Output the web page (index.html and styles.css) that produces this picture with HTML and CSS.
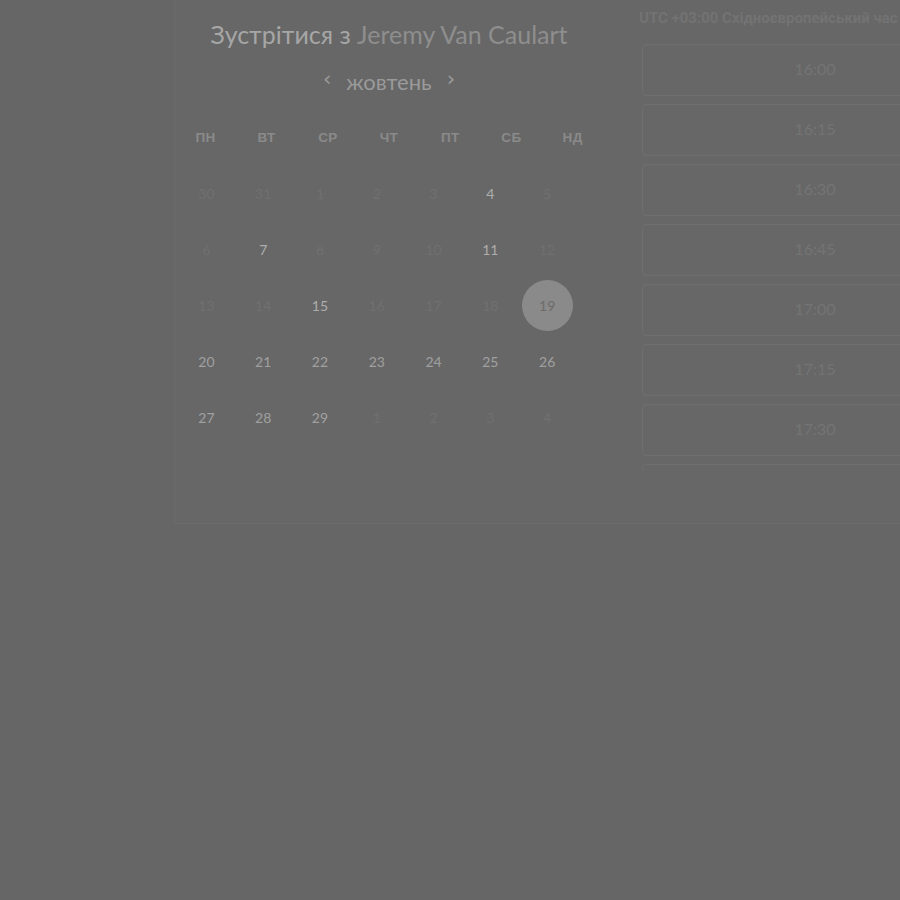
FILE: index.html
```html
<!DOCTYPE html>
<html lang="uk">
<head>
<meta charset="utf-8">
<link rel="stylesheet" href="styles.css">
</head>
<body>
<div class="panel">
  <section class="cal">
    <h1 class="title"><span class="lead">Зустрітися з</span> <span class="name">Jeremy Van Caulart</span></h1>
    <div class="month">
      <span class="chev">‹</span>
      <span class="mname">жовтень</span>
      <span class="chev">›</span>
    </div>
    <div class="weekdays">
      <span>ПН</span><span>ВТ</span><span>СР</span><span>ЧТ</span><span>ПТ</span><span>СБ</span><span>НД</span>
    </div>
    <div class="days">
      <span class="d off">30</span><span class="d off">31</span><span class="d off">1</span><span class="d off">2</span><span class="d off">3</span><span class="d on">4</span><span class="d off">5</span>
      <span class="d off">6</span><span class="d on">7</span><span class="d off">8</span><span class="d off">9</span><span class="d off">10</span><span class="d on">11</span><span class="d off">12</span>
      <span class="d off">13</span><span class="d off">14</span><span class="d on">15</span><span class="d off">16</span><span class="d off">17</span><span class="d off">18</span><span class="d sel">19</span>
      <span class="d mid">20</span><span class="d mid">21</span><span class="d mid">22</span><span class="d mid">23</span><span class="d mid">24</span><span class="d mid">25</span><span class="d mid">26</span>
      <span class="d mid">27</span><span class="d mid">28</span><span class="d mid">29</span><span class="d off">1</span><span class="d off">2</span><span class="d off">3</span><span class="d off">4</span>
    </div>
  </section>
  <section class="times">
    <div class="tz">UTC +03:00 Східноєвропейський час</div>
    <div class="slots">
      <div class="slot">16:00</div>
      <div class="slot">16:15</div>
      <div class="slot">16:30</div>
      <div class="slot">16:45</div>
      <div class="slot">17:00</div>
      <div class="slot">17:15</div>
      <div class="slot">17:30</div>
      <div class="slot"></div>
    </div>
  </section>
</div>
</body>
</html>
```
FILE: styles.css
```css
html, body {
  margin: 0;
  padding: 0;
  background: #666666;
  width: 900px;
  height: 900px;
  overflow: hidden;
}

.panel {
  display: flex;
  margin-left: 174px;
  width: 900px;
  height: 523px;
  border-left: 1px solid #6b6b6b;
  border-bottom: 1px solid #6b6b6b;
  background: #676767;
}

.cal {
  flex: none;
  width: 428px;
  display: flex;
  flex-direction: column;
  align-items: center;
}

.title {
  margin: 18px 0 0;
  font-family: "Lato", "Open Sans", sans-serif;
  font-weight: 400;
  font-size: 25px;
  line-height: 32px;
  white-space: nowrap;
}
.title .lead { color: #a6a6a6; }
.title .name { color: #8e8e8e; }

.month {
  margin-top: 18px;
  display: flex;
  align-items: center;
  gap: 15px;
  height: 28px;
}
.mname {
  font-family: "Lato", "Open Sans", sans-serif;
  font-size: 22px;
  color: #9a9a9a;
  line-height: 28px;
}
.chev {
  font-family: "DejaVu Sans", sans-serif;
  font-size: 21px;
  color: #9a9a9a;
  line-height: 28px;
  margin-top: -6px;
}

.weekdays {
  margin-top: 34px;
  display: grid;
  grid-template-columns: repeat(7, 61.2px);
  font-family: "Liberation Sans", Arial, sans-serif;
  font-weight: 700;
  font-size: 13.5px;
  line-height: 16px;
  color: #8a8a8a;
  text-align: center;
  letter-spacing: 0.3px;
}

.days {
  align-self: flex-start;
  margin-left: 3px;
  margin-top: 19px;
  display: grid;
  grid-template-columns: repeat(7, 56.8px);
  grid-auto-rows: 56px;
  font-family: "Lato", "Open Sans", sans-serif;
  font-size: 14px;
}
.d {
  display: flex;
  align-items: center;
  justify-content: center;
}
.off { color: #707070; }
.on { color: #adadad; }
.mid { color: #a0a0a0; }
.sel {
  width: 51px;
  height: 51px;
  margin: auto;
  border-radius: 50%;
  background: #8a8a8a;
  color: #6c6c6c;
}

.times {
  flex: 1;
  padding-left: 36px;
  display: flex;
  flex-direction: column;
}
.tz {
  margin-top: 10px;
  font-family: "Roboto", "Liberation Sans", sans-serif;
  font-weight: 700;
  font-size: 15px;
  line-height: 16px;
  color: #737373;
  white-space: nowrap;
}
.slots {
  margin-top: 18px;
  margin-left: 3px;
  width: 346px;
  height: 427px;
  overflow: hidden;
  display: flex;
  flex-direction: column;
  gap: 8px;
}
.slot {
  flex: none;
  height: 50px;
  box-sizing: content-box;
  border: 1px solid #6f6f6f;
  border-radius: 4px;
  display: flex;
  align-items: center;
  justify-content: center;
  padding-bottom: 2px;
  height: 48px;
  font-family: "Lato", "Open Sans", sans-serif;
  font-size: 16px;
  line-height: 16px;
  color: #747474;
}
```
